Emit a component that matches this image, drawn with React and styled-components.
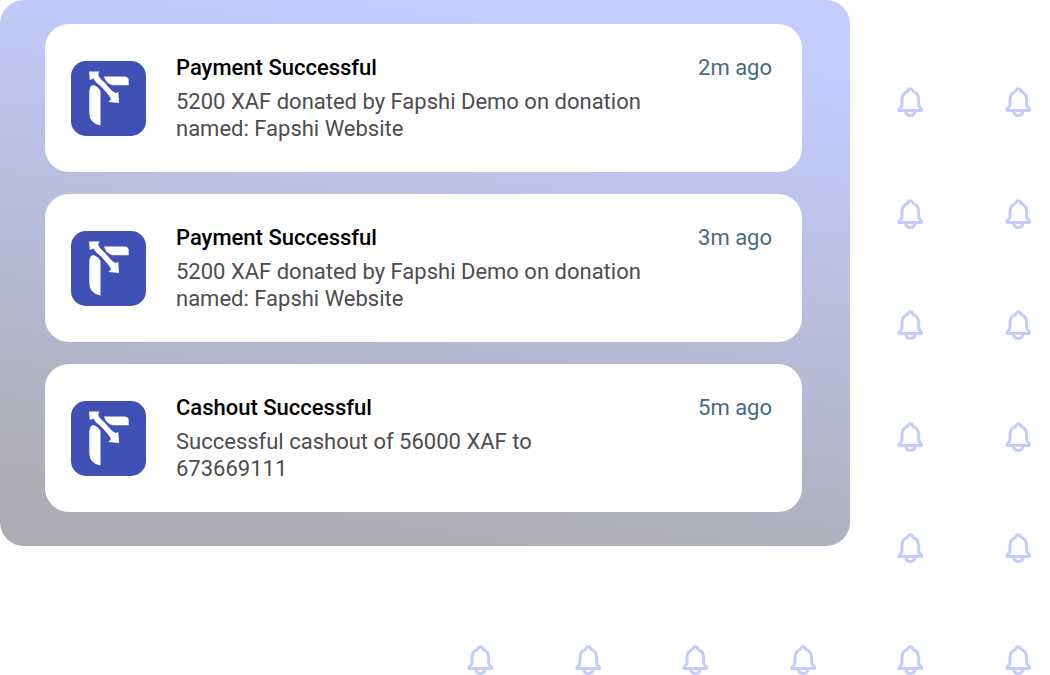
import React from 'react';
import styled, { createGlobalStyle } from 'styled-components';

const GlobalStyle = createGlobalStyle`
  * {
    box-sizing: border-box;
  }

  body {
    margin: 0;
    background-color: #ffffff;
    font-family: Roboto, 'Liberation Sans', sans-serif;
  }
`;

const Page = styled.main`
  display: grid;
  grid-template-rows: 1fr auto;
  min-height: 100vh;
`;

const TopArea = styled.div`
  display: grid;
  grid-template-columns: minmax(0, 17fr) minmax(0, 4fr);
`;

const Panel = styled.section`
  align-self: start;
  padding: 24px 48px 34px 45px;
  border-radius: 24px;
  background: linear-gradient(189deg, #c2ccff 12%, #adadb5 90%);
`;

const NotificationList = styled.ul`
  display: flex;
  flex-direction: column;
  gap: 22px;
  margin: 0;
  padding: 0;
  list-style: none;
`;

const Card = styled.li`
  display: flex;
  align-items: center;
  gap: 30px;
  padding: 30px 30px 30px 26px;
  border-radius: 24px;
  background-color: #ffffff;
`;

const Logo = styled.svg`
  flex: none;
  width: 75px;
  height: 75px;
`;

const Content = styled.div`
  flex: 1;
  min-width: 0;
`;

const CardHeader = styled.div`
  display: flex;
  justify-content: space-between;
  margin-bottom: 7px;
  font-size: 22px;
  line-height: 27px;
`;

const Title = styled.h2`
  margin: 0;
  color: #000000;
  font-size: inherit;
  font-weight: 500;
`;

const Time = styled.time`
  color: #466a80;
`;

/* pre-line keeps the line break that comes with the message */
const Message = styled.p`
  margin: 0;
  color: #4d4d4d;
  font-size: 22px;
  line-height: 27px;
  white-space: pre-line;
`;

const BellColumns = styled.div`
  display: flex;
  justify-content: space-between;
  padding: 87px 19px 82px 47px;
`;

const BellColumn = styled.div`
  display: flex;
  flex-direction: column;
  justify-content: space-between;
`;

const BellRow = styled.div`
  display: flex;
  justify-content: space-between;
  width: 564px;
  margin: 0 19px 0 auto;
`;

const BellSvg = styled.svg`
  display: block;
  width: 26px;
  height: 30px;
  fill: none;
  stroke: #c2ccff;
  stroke-width: 3;
  stroke-linejoin: round;
`;

const notifications = [
  {
    id: 1,
    title: 'Payment Successful',
    message: '5200 XAF donated by Fapshi Demo on donation\nnamed: Fapshi Website',
    time: '2m ago',
  },
  {
    id: 2,
    title: 'Payment Successful',
    message: '5200 XAF donated by Fapshi Demo on donation\nnamed: Fapshi Website',
    time: '3m ago',
  },
  {
    id: 3,
    title: 'Cashout Successful',
    message: 'Successful cashout of 56000 XAF to\n673669111',
    time: '5m ago',
  },
];

const FapshiLogo = () => (
  <Logo viewBox="0 0 75 75" aria-hidden="true">
    <rect width="75" height="75" rx="15" fill="#3f51b5" />
    <g fill="#ffffff">
      <path d="M18 10.5 L28.5 10.5 L27.3 13 C27.5 17 31 18.5 34.5 22.500 C38 26.500 41 30.500 44.500 32 L47.300 31 L48 42 L37.500 41 L40 38 C38 34 34.500 30.500 31.500 27 C28 23 24.500 22 22.500 17.500 L18.800 19 Z" />
      <path d="M33 15.500 H54 Q57.700 16 57.700 19 V24.300 H42 Q35 23 33 15.500 Z" />
      <path d="M18.300 30 Q19 24 22.500 24 Q27 25.500 29.500 30 V64.500 Q18.300 62.500 18.300 52 Z" />
    </g>
  </Logo>
);

const Bell = () => (
  <BellSvg viewBox="0 0 26 30" aria-hidden="true">
    <path d="M13.300 1.800 C11.900 1.800 11.200 2.800 10.800 4.200 C7 5.800 5 8.800 5 12.500 V17 C5 19 4.300 20.300 2.900 21.300 C1.300 22.600 1.500 23.600 3.200 23.600 H23.400 C25.100 23.600 25.300 22.600 23.700 21.300 C22.300 20.300 21.600 19 21.600 17 V12.500 C21.600 8.800 19.600 5.800 15.800 4.200 C15.400 2.800 14.700 1.800 13.300 1.800 Z" />
    <path d="M8.800 24 C8.800 27 10.800 28.400 13.300 28.400 C15.800 28.400 17.800 27 17.800 24" />
  </BellSvg>
);

const NotificationCard = ({ title, message, time }) => (
  <Card>
    <FapshiLogo />
    <Content>
      <CardHeader>
        <Title>{title}</Title>
        <Time>{time}</Time>
      </CardHeader>
      <Message>{message}</Message>
    </Content>
  </Card>
);

const bells = (count) => Array.from({ length: count }, (_, i) => <Bell key={i} />);

const App = () => {
  return (
    <>
      <GlobalStyle />
      <Page>
        <TopArea>
          <Panel>
            <NotificationList>
              {notifications.map((item) => (
                <NotificationCard key={item.id} {...item} />
              ))}
            </NotificationList>
          </Panel>
          <BellColumns>
            <BellColumn>{bells(5)}</BellColumn>
            <BellColumn>{bells(5)}</BellColumn>
          </BellColumns>
        </TopArea>
        <BellRow>{bells(6)}</BellRow>
      </Page>
    </>
  );
};

export default App;
